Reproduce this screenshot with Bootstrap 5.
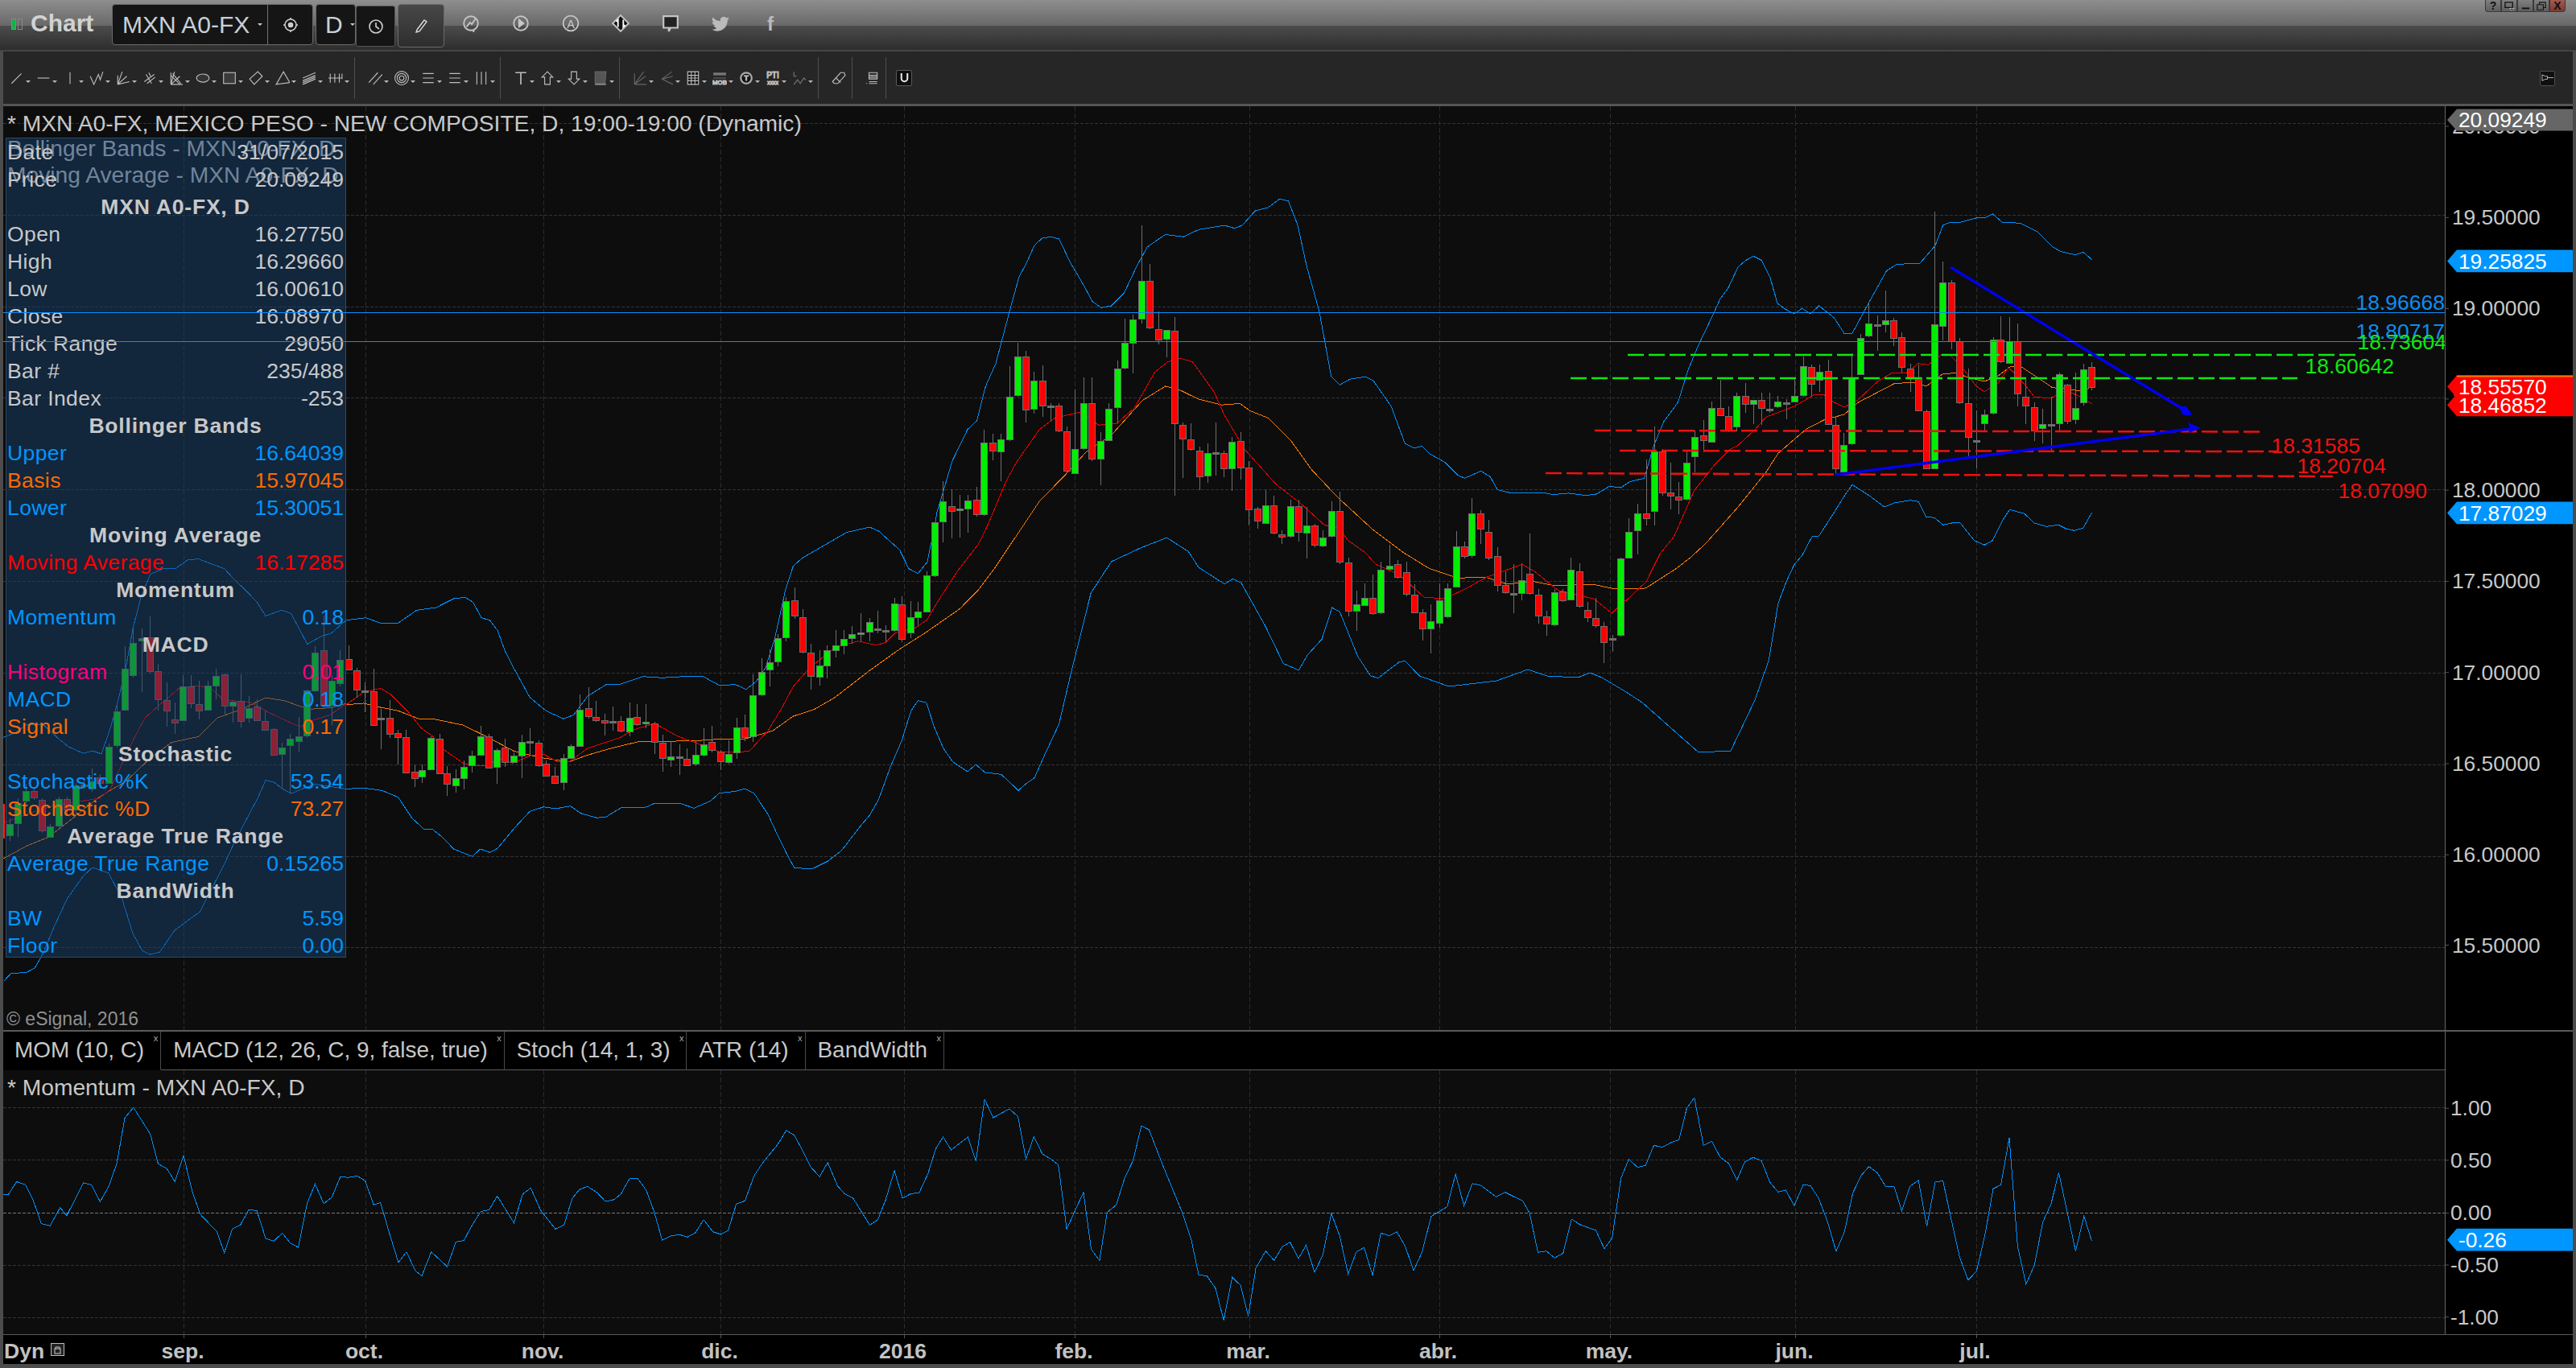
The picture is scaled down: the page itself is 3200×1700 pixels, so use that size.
<!DOCTYPE html>
<html lang="es">
<head>
  <meta charset="UTF-8" />
  <title>Chart - MXN A0-FX</title>
  <link href="https://cdn.jsdelivr.net/npm/bootstrap@5.3.3/dist/css/bootstrap.min.css" rel="stylesheet">
  <style>
    html, body { height: 100%; }
    body { background: #000; color: #c8c8c8; font-family: "Liberation Sans", Arial, sans-serif; font-size: 26.5px; overflow: hidden; }
    .app-window { width: 3200px; height: 1700px; background: #4c4c4c; padding: 0 4px 3px 4px; }

    /* title row */
    .title-bar { height: 64px; margin: 0 -4px; padding-left: 14px; background: linear-gradient(#8e8e8e 0, #686868 32px, #4c4c4c 32px, #2d2d2d 62px, #454545 62px); position: relative; }
    .live-mark { width: 15px; height: 14px; margin-top: 23px; }
    .live-mark i { display: block; width: 6px; height: 14px; border: 1px solid #888; }
    .live-mark i:first-child { background: #12b04a; margin-right: 2px; }
    .app-name { font-size: 30px; font-weight: 700; color: #d2d2d2; line-height: 58px; margin-left: 9px; width: 101px; }
    .sym-box { height: 51px; margin-top: 5px; background: #151515; border: 1px solid #6a6a6a; border-radius: 4px; color: #c8d0d8; }
    .sym-text { font-size: 30px; line-height: 49px; }
    .caret-mini { width: 0; height: 0; border-left: 3px solid transparent; border-right: 3px solid transparent; border-top: 3px solid #ccc; }
    .head-ico { width: 62px; height: 58px; }
    .head-ico svg { display: block; overflow: visible; }
    .pencil-box { width: 58px; height: 54px; margin: 5px 2px 0 3px; background: linear-gradient(#474747, #2e2e2e); border: 1px solid #6a6a6a; border-radius: 4px; }
    .clock-box { width: 49px; height: 51px; margin-top: 7px; background: #151515; border: 1px solid #555; border-radius: 3px; }
    .win-btns { position: absolute; top: 0; right: 13px; }
    .win-btn { width: 20px; height: 15px; border: 1px solid #3a3a3a; border-top: 0; background: linear-gradient(#808080, #5e5e5e); color: #111; font-size: 14px; font-weight: 700; line-height: 14px; text-align: center; }
    .win-btn:first-child { border-radius: 0 0 0 4px; }
    .win-btn:last-child { border-radius: 0 0 4px 0; background: linear-gradient(#a55a4e, #7c3a30); }

    /* drawing tools row */
    .draw-bar { height: 65px; padding-left: 5px; background: #262626; position: relative; }
    .tool-btn { width: 33px; height: 100%; padding-left: 3px; flex: none; }
    .tool-btn-sm { width: 26px; }
    .tool-btn b { display: block; width: 0; height: 0; margin: 10px 0 0 2px; border-left: 3px solid transparent; border-right: 3px solid transparent; border-top: 3px solid #bbb; }
    .tool-sep { width: 1px; height: 52px; margin: 0 13px 0 2px; background: #4e4e4e; flex: none; }
    .magnet-btn { width: 20px; height: 20px; margin-left: -1px; background: #0f0f0f; border: 1px solid #5a5a5a; border-radius: 2px; flex: none; }
    .pin-btn { position: absolute; top: 24px; left: 3151px; width: 19px; height: 19px; background: #0f0f0f; border: 1px solid #4f4f4f; border-radius: 2px; }
    .dash-top { height: 3px; background: #555; }

    /* chart panes */
    .pane-row { width: 3192px; flex: none; }
    .plot-area { width: 3033px; position: relative; background: #0d0d0d; overflow: hidden; flex: none; }
    .axis-col { width: 159px; background: #000; border-left: 1px solid #666; flex: none; position: relative; }
    .fill-svg { position: absolute; inset: 0; width: 100%; height: 100%; display: block; }
    svg text { font-family: "Liberation Sans", Arial, sans-serif; font-size: 26.5px; fill: #c8c8c8; }
    svg text.pane-title { font-size: 28.2px; }
    svg text.tag-text { fill: #fff; }
    svg text.bold-text { font-weight: 700; fill: #c2c2c2; }

    /* data window, lies over the chart */
    .data-window { position: absolute; left: 3px; top: 39px; width: 423px; height: 1019px; background: rgba(23, 63, 107, .5); border: 1px solid #2b4a66; padding: 0 2px 0 1px; }
    .data-row { height: 34px; line-height: 34px; white-space: nowrap; }
    .data-row span:first-child { letter-spacing: .4px; }
    .data-head { font-weight: 700; text-align: center; letter-spacing: .8px; }
    .c-blue { color: #0096ff; }
    .c-orange { color: #ff6a00; }
    .c-red { color: #f00; }
    .c-pink { color: #ff0080; }

    /* indicator tabs */
    .tab-strip { height: 50px; background: #000; border-top: 2px solid #5a5a5a; }
    .tab-list { width: 3033px; flex: none; border-bottom: 1px solid #5a5a5a; }
    .ind-tab { height: 48px; line-height: 46px; font-size: 27.9px; padding: 0 20px 0 15px; background: #000; border-right: 1px solid #4a4a4a; position: relative; margin-bottom: -1px; border-bottom: 1px solid #5a5a5a; color: #c8c8c8; white-space: nowrap; }
    .ind-tab:first-child { padding-left: 14px; border-bottom-color: #000; }
    .tab-close { position: absolute; top: 3px; right: 3px; font-size: 11px; line-height: 11px; color: #aaa; }
    .time-axis { height: 37px; background: #000; border-top: 1px solid #5a5a5a; }
  </style>
</head>
<body>
  <div class="app-window d-flex flex-column">

    <!-- Title row -->
    <div class="title-bar d-flex">
      <div class="live-mark d-flex"><i></i><i></i></div>
      <div class="app-name">Chart</div>
      <div class="sym-box d-flex align-items-center" style="width:250px">
        <span class="sym-text ms-2 ps-1">MXN A0-FX</span>
        <span class="caret-mini" style="margin-left:10px"></span>
        <span class="d-flex align-items-center justify-content-center h-100 border-start border-secondary flex-grow-1" style="margin-left:6px" id="icoGear"></span>
      </div>
      <div class="sym-box d-flex align-items-center" style="width:50px;margin-left:3px">
        <span class="sym-text" style="margin-left:11px">D</span>
        <span class="caret-mini" style="margin-left:9px"></span>
      </div>
      <div class="clock-box d-flex align-items-center justify-content-center" id="icoClock"></div>
      <div class="pencil-box d-flex align-items-center justify-content-center" id="icoPencil"></div>
      <div class="d-flex" id="headIcons"></div>
      <div class="win-btns d-flex">
        <div class="win-btn">?</div>
        <div class="win-btn" id="icoScreen"></div>
        <div class="win-btn" id="icoMin"></div>
        <div class="win-btn" id="icoMax"></div>
        <div class="win-btn">X</div>
      </div>
    </div>

    <!-- Drawing tools row -->
    <div class="draw-bar d-flex align-items-center" id="drawBar">
      <div class="magnet-btn d-flex align-items-center justify-content-center" id="icoMagnet"></div>
      <div class="pin-btn d-flex align-items-center justify-content-center" id="icoPin"></div>
    </div>
    <div class="dash-top"></div>

    <!-- Price pane -->
    <div class="pane-row d-flex" style="height:1148px">
      <div class="plot-area">
        <svg class="fill-svg" id="priceSvg" viewBox="4 132 3033 1148"></svg>
        <div class="data-window">
          <div class="data-row d-flex justify-content-between"><span>Date</span><span>31/07/2015</span></div>
          <div class="data-row d-flex justify-content-between"><span>Price</span><span>20.09249</span></div>
          <div class="data-row data-head">MXN A0-FX, D</div>
          <div class="data-row d-flex justify-content-between"><span>Open</span><span>16.27750</span></div>
          <div class="data-row d-flex justify-content-between"><span>High</span><span>16.29660</span></div>
          <div class="data-row d-flex justify-content-between"><span>Low</span><span>16.00610</span></div>
          <div class="data-row d-flex justify-content-between"><span>Close</span><span>16.08970</span></div>
          <div class="data-row d-flex justify-content-between"><span>Tick Range</span><span>29050</span></div>
          <div class="data-row d-flex justify-content-between"><span>Bar #</span><span>235/488</span></div>
          <div class="data-row d-flex justify-content-between"><span>Bar Index</span><span>-253</span></div>
          <div class="data-row data-head">Bollinger Bands</div>
          <div class="data-row d-flex justify-content-between c-blue"><span>Upper</span><span>16.64039</span></div>
          <div class="data-row d-flex justify-content-between c-orange"><span>Basis</span><span>15.97045</span></div>
          <div class="data-row d-flex justify-content-between c-blue"><span>Lower</span><span>15.30051</span></div>
          <div class="data-row data-head">Moving Average</div>
          <div class="data-row d-flex justify-content-between c-red"><span>Moving Average</span><span>16.17285</span></div>
          <div class="data-row data-head">Momentum</div>
          <div class="data-row d-flex justify-content-between c-blue"><span>Momentum</span><span>0.18</span></div>
          <div class="data-row data-head">MACD</div>
          <div class="data-row d-flex justify-content-between c-pink"><span>Histogram</span><span>0.01</span></div>
          <div class="data-row d-flex justify-content-between c-blue"><span>MACD</span><span>0.18</span></div>
          <div class="data-row d-flex justify-content-between c-orange"><span>Signal</span><span>0.17</span></div>
          <div class="data-row data-head">Stochastic</div>
          <div class="data-row d-flex justify-content-between c-blue"><span>Stochastic %K</span><span>53.54</span></div>
          <div class="data-row d-flex justify-content-between c-orange"><span>Stochastic %D</span><span>73.27</span></div>
          <div class="data-row data-head">Average True Range</div>
          <div class="data-row d-flex justify-content-between c-blue"><span>Average True Range</span><span>0.15265</span></div>
          <div class="data-row data-head">BandWidth</div>
          <div class="data-row d-flex justify-content-between c-blue"><span>BW</span><span>5.59</span></div>
          <div class="data-row d-flex justify-content-between c-blue"><span>Floor</span><span>0.00</span></div>
        </div>
        <svg class="fill-svg" id="overSvg" viewBox="4 132 3033 1148"></svg>
      </div>
      <div class="axis-col"><svg class="fill-svg" id="priceAxis" viewBox="3037 132 159 1148"></svg></div>
    </div>

    <!-- Indicator tabs -->
    <div class="pane-row tab-strip d-flex">
      <div class="tab-list d-flex">
        <div class="ind-tab">MOM (10, C)<span class="tab-close">x</span></div>
        <div class="ind-tab">MACD (12, 26, C, 9, false, true)<span class="tab-close">x</span></div>
        <div class="ind-tab">Stoch (14, 1, 3)<span class="tab-close">x</span></div>
        <div class="ind-tab">ATR (14)<span class="tab-close">x</span></div>
        <div class="ind-tab">BandWidth<span class="tab-close">x</span></div>
      </div>
      <div class="axis-col"></div>
    </div>

    <!-- Momentum pane -->
    <div class="pane-row d-flex" style="height:328px">
      <div class="plot-area"><svg class="fill-svg" id="momSvg" viewBox="4 1331 3033 328"></svg></div>
      <div class="axis-col"><svg class="fill-svg" id="momAxis" viewBox="3037 1331 159 328"></svg></div>
    </div>

    <!-- Time axis -->
    <div class="pane-row time-axis"><svg class="d-block" id="timeSvg" width="3192" height="36" viewBox="4 1660 3192 36"></svg></div>
  </div>

  <script>
    // Month gridlines, same x in both panes
    const MONTHS = [['sep.',228],['oct.',453.5],['nov.',675],['dic.',895],['2016',1122.5],['feb.',1335],['mar.',1551.5],['abr.',1787.5],['may.',2000],['jun.',2230],['jul.',2454.5]];
    const priceY = p => 608.3 + (18 - p) * 227.6;
    const GRID_PRICES = [20,19.5,19,18.5,18,17.5,17,16.5,16,15.5];

    // Each series was read from crops of the screenshot: sx/ox/sy/oy turn crop coords into page coords
    const Z3 = { sx: 3, ox: 0, sy: 2.8, oy: 660 };
    const Z8 = { sx: 1.742, ox: 420, sy: 3, oy: 600 };
    const Z7 = { sx: 1.568, ox: 1100, sy: 2.8, oy: 280 };
    const Z9 = { sx: 2.01, ox: 1980, sy: 3, oy: 300 };
    const Z4 = { sx: 1.568, ox: 2200, sy: 3, oy: 240 };
    const PX = { sx: 1, ox: 0, sy: 1, oy: 0 };

    const CANDLES = [
      [Z3, '35,g,1020,1057,1000,1078;65,g,945,1017,930,1065;97,g,905,938,880,945;126,r,905,928,895,935;157,r,935,1042,930,1050;187,g,1027,1065,1020,1068;220,g,932,1025,925,1030;250,r,932,968,925,985;281,g,885,968,875,985;312,d,885,885,860,890;343,g,870,897,825,908;373,r,858,875,845,895;404,g,750,877,740,880;435,g,628,745,600,752;466,g,478,622,400,625;496,g,390,502,340,510;527,g,372,382,340,560;558,r,370,488,297,495;589,r,488,585,462,625;620,r,587,625,525,680;650,r,656,665,595,705;682,g,540,658,500,662;712,r,540,600,500,615;742,r,603,625,520,655;773,g,537,622,520,625;805,g,505,538,480,585;836,r,498,608,495,640;866,g,593,608,590,665;898,r,592,662,497,682;928,g,615,650,575,665;958,r,610,658,585,660;988,r,660,692,628,695;1020,r,690,777,685,782;1050,g,752,775,735,895;1081,g,723,746,705,910;1112,g,715,730,648,770;1144,g,555,712,552,720;1174,g,422,553,400,560;1205,r,415,605,295,620;1235,g,520,605,500,675;1267,g,447,530,415,540'],
      [Z8, '22,r,658,697,605,700;40,r,700,772,690,800;58,d,776,776,745,855;76,r,778,902,693,905;93,d,878,878,843,992;111,r,877,935,810,950;129,r,934,949,920,1050;147,r,949,1081,920,1082;165,r,1078,1102,1052,1133;182,g,1070,1096,1050,1120;201,g,952,1067,945,1072;219,r,955,1082,937,1085;236,r,1084,1123,1055,1167;254,g,1100,1127,1068,1155;272,g,1058,1102,1035,1143;290,g,1018,1054,1000,1080;308,g,945,1015,905,1018;326,r,945,1062,937,1065;344,g,997,1060,990,1122;361,r,988,1040,955,1060;379,g,1018,1040,1005,1045;397,g,967,1018,940,1100;415,d,965,965,915,1020;433,r,970,1052,960,1060;450,r,1047,1091,1035,1095;469,r,1093,1120,1060,1122;487,g,1027,1117,1010,1145;504,g,982,1027,975,1030;522,g,847,980,790,985;541,r,840,869,762,880;558,r,874,884,812,890;576,r,886,895,860,942;594,d,890,890,835,925;612,r,887,925,870,930;630,g,877,928,820,945;647,r,874,900,825,905;666,g,891,898,825,915;684,r,896,967,890,1010;702,r,970,1025,940,1078;719,g,1021,1033,962,1060;738,d,1022,1022,975,1090;755,r,1030,1052,990,1055;773,g,1015,1048,960,1055;790,g,974,1013,915,1020;809,r,967,997,905,1005;827,r,1003,1037,995,1070;844,g,1010,1040,960,1048;862,g,913,1005,875,1030;880,r,912,948,863,962;898,g,793,945,715,965;916,g,706,790,655,795;934,g,670,697,620,760;952,g,578,667,565,685;969,g,440,575,425,590;987,r,439,496,390,508;1005,r,500,631,470,635;1023,r,634,721,600,772;1041,g,681,724,625,755;1058,g,625,680,605,730;1076,g,607,623,550,650;1094,g,583,605,550,640;1112,g,565,578,535,600;1130,g,559,565,487,590;1149,g,520,556,505,590;1167,d,545,545,478,560;1184,d,553,553,530,595;1203,g,451,548,430,555;1220,r,454,583,422,595;1238,g,502,558,440,580;1255,g,481,502,445,530;1274,g,346,479,330,482;1291,g,148,346,144,350;1309,g,70,145,-6,222;1327,r,88,106,25,207;1345,g,97,103,45,205;1363,g,67,97,45,185;1381,r,64,118,15,125'],
      [Z7, '192,g,757,1006,712,1012;209,r,757,785,725,817;225,g,746,788,725,890;241,g,595,746,490,750;257,g,457,592,410,595;273,r,457,640,437,685;289,g,539,639,510,655;305,r,539,628,488,665;321,d,630,630,620,680;337,r,628,715,620,720;353,r,718,855,700,860;369,g,777,863,572,865;386,g,620,775,530,780;402,r,620,813,530,820;418,g,750,813,720,905;434,g,637,747,620,750;451,g,499,634,470,690;466,g,410,496,325,500;482,g,328,410,310,515;499,g,194,326,0,342;515,r,194,356,135,360;531,r,360,398,300,415;547,g,365,396,365,460;563,r,366,690,318,942;579,r,695,743,685,878;595,r,746,779,690,785;611,r,785,874,770,920;627,g,793,872,760,895;643,d,792,792,685,870;659,r,791,846,785,875;675,g,754,846,735,925;691,r,751,844,720,885;707,r,844,989,820,1045;724,r,985,1028,980,1055;740,g,975,1037,920,1040;756,r,975,1070,940,1075;772,r,1074,1083,1060,1108;788,g,976,1082,955,1085;804,r,978,1068,955,1100;820,g,1045,1070,980,1160;836,r,1043,1112,1040,1120;852,g,1085,1115,1060,1120;869,g,995,1082,960,1085;885,r,995,1170,928,1180;901,r,1174,1340,1155,1360;917,g,1320,1340,1270,1410;933,g,1297,1322,1245,1325;949,r,1297,1350,1215,1355;965,g,1197,1348,1170,1352;982,g,1183,1195,1112,1198;998,r,1180,1224,1165,1230;1014,r,1208,1283,1170,1290;1030,r,1284,1348,1250,1350;1046,r,1348,1404,1335,1445;1062,g,1378,1402,1320,1490;1078,g,1306,1383,1245,1400;1094,g,1262,1360,1245,1365;1111,g,1118,1258,1065,1260;1127,r,1118,1152,1100,1158;1142,g,1001,1149,950,1155;1158,r,1003,1056,990,1110;1175,r,1068,1157,1025,1165;1191,r,1152,1252,1120,1275;1207,r,1252,1278,1205,1282;1223,d,1282,1282,1180,1350;1239,g,1234,1280,1175,1305;1255,r,1213,1280,1072,1285;1271,r,1284,1358,1265,1385;1287,r,1362,1385,1340,1428;1303,g,1276,1390,1265,1395;1319,r,1273,1305,1265,1310;1335,g,1197,1303,1155,1305;1351,r,1205,1324,1175,1330;1367,r,1337,1364,1310,1380;1383,r,1366,1392,1295,1400;1399,r,1393,1450,1380,1522;1416,d,1438,1438,1425,1485;1432,g,1160,1425,1155,1430;1448,g,1066,1157,1018,1160;1465,g,1002,1062,970,1145;1481,r,1002,1018,815,1045'],
      [Z9, '150,g,784,1006,690,1060;170,r,784,935,775,947;191,r,937,947,825,1000;212,r,950,962,897,1017;232,g,826,961,780,965;252,g,730,800,705,860;273,r,722,742,665,785;294,g,622,746,597,750;315,r,622,647,515,650;335,r,650,705,615,710;356,g,577,690,565,708;377,r,577,607,528,640;397,g,592,605,590,680;418,r,590,622,565,685;439,d,627,627,563,640;459,g,598,614,575,622;480,d,603,603,587,662;501,g,577,598,510,600;522,g,465,574,430,578;542,r,469,532,460,580;562,g,485,516,460,560;584,r,482,682,440,685;604,r,683,845,650,870;624,g,760,857,715,862;644,g,510,754,418,758;665,g,361,496,345,498;686,g,305,352,225,357;707,d,312,312,275,408;728,g,295,308,183,340;748,r,295,361,285,390;768,r,356,469,340,490;789,r,473,510,455,560;810,r,508,631,460,632;831,r,634,847,628,849;851,g,310,845,-110,848;871,g,154,316,75,368;893,r,154,372,145,402;913,r,372,601,360,605;934,r,602,730,475,805;954,d,744,744,630,845;975,g,646,679,628,708;996,g,367,640,358,645;1016,r,365,448,280,452;1038,g,371,452,283,455;1058,r,371,568,305,615;1078,r,578,613,510,682;1099,r,617,706,600,744;1120,g,682,697,623,752;1141,d,684,684,580,785;1161,g,494,679,490,705;1181,r,533,670,530,680;1202,g,620,664,490,680;1223,g,476,601,456,612;1243,r,467,544,450,556']
    ];

    const UPPER = [
      [Z3, '12,718 60,700 100,672 160,672 215,720 255,750 310,773 345,765 378,775 410,690 440,590 470,470 495,340 525,230 560,150 610,130 655,130 700,100 740,97 790,115 835,130 870,165 925,215 960,250 990,295 1050,275 1085,287 1145,393 1200,365 1235,355 1290,310'],
      [Z8, '18,512 60,503 95,525 130,523 170,475 212,465 250,432 275,427 292,445 310,503 328,512 345,550 362,630 380,690 415,800 450,850 488,880 510,865 540,795 580,752 612,750 660,722 700,727 760,721 790,722 825,755 860,752 883,770 905,740 925,690 945,580 968,400 985,310 1005,280 1050,235 1100,185 1150,165 1170,180 1215,250 1235,320 1255,338 1275,295 1290,170'],
      [Z7, '100,1000 110,940 130,820 160,710 178,680 195,560 215,480 240,310 260,180 275,130 290,70 305,45 322,40 338,47 360,130 385,205 403,265 420,287 440,280 465,235 490,140 510,75 545,32 580,40 610,15 660,0 680,10 695,0 720,-50 745,-62 768,-92 785,-84 803,0 820,140 845,300 868,525 885,555 905,535 935,527 950,540 985,630 1012,760 1030,775 1045,768 1060,795 1090,825 1115,870 1128,880 1160,855 1178,875 1192,920 1215,930 1280,930 1300,937 1330,932 1365,940 1385,935 1410,908 1432,913 1450,892 1478,880'],
      [Z9, '150,760 175,670 210,600 235,480 260,390 300,265 315,215 335,175 360,95 380,70 398,55 418,70 440,135 458,230 475,250 500,270 520,250 540,270 562,240 600,285 625,343 645,343'],
      [Z4, '190,410 225,290 245,265 290,262 320,195 335,120 350,108 370,108 405,90 415,93 432,78 450,108 485,112 520,145 548,200 565,218 592,230 608,220 625,248']
    ];
    const LOWER = [
      [Z3, '15,1565 40,1540 100,1535 130,1520 160,1470 200,1380 250,1280 310,1200 345,1170 405,1190 455,1280 495,1400 530,1460 560,1473 595,1465 650,1390 700,1355 745,1325 780,1260 830,1170 870,1090 920,1000 960,930 990,867 1020,873 1050,895 1085,913 1120,900 1170,880 1290,897'],
      [Z8, '18,1141 55,1138 95,1147 130,1172 160,1250 185,1290 205,1293 225,1320 250,1365 290,1393 308,1365 328,1378 345,1363 380,1290 415,1225 445,1208 470,1215 503,1205 525,1232 560,1249 580,1245 612,1212 665,1210 685,1195 740,1195 770,1213 805,1187 825,1157 860,1150 880,1140 900,1157 930,1235 950,1310 970,1380 987,1435 1025,1440 1060,1410 1090,1370 1130,1280 1150,1240 1170,1180 1195,1060 1220,960 1240,850 1255,812 1273,820 1290,910 1310,990 1330,1040 1362,1077 1380,1050 1400,1080 1435,1087 1472,1147 1490,1120 1507,1100 1530,1010 1560,900'],
      [Z7, '360,1568 400,1280 440,1170 500,1120 548,1087 590,1135 610,1190 660,1248 677,1230 693,1245 740,1395 775,1525 805,1548 822,1495 850,1440 870,1330 885,1345 920,1500 945,1568 960,1575 1000,1520 1012,1515 1040,1568'],
      [PX, '1800,853 1859,846 1898,832 1922,840 1960,842 1975,836 1990,842 2020,860 2040,873 2110,935 2150,933 2180,870'],
      [Z9, '437,1560 460,1350 480,1270 500,1205 520,1170 545,1100 562,1098 600,1010 625,950 645,907 690,950 725,990 750,975 790,965 810,970 830,1027 850,1030 872,1057 900,1048 915,1050 950,1115 975,1132 995,1115 1020,1040 1038,1000 1075,1015 1100,1050 1130,1063 1160,1057 1180,1072 1200,1078 1222,1068 1243,1012']
    ];
    const MA_RED = [
      [Z3, '15,1015 100,985 200,955 300,940 370,930 410,900 460,800 500,720 540,650 600,600 670,545 740,538 790,550 830,585 870,590 930,595 1000,630 1090,670 1120,680 1160,660 1230,640 1290,600'],
      [Z8, '18,827 55,780 92,766 115,790 155,860 180,915 205,945 225,990 270,1045 290,1053 320,1053 350,1030 378,1045 420,1015 445,1012 475,1040 500,1040 540,990 610,950 640,920 685,897 735,945 775,970 825,1003 860,1005 890,1000 930,925 960,840 985,760 1020,690 1075,615 1125,590 1165,605 1185,595 1205,560 1250,540 1275,510 1295,450 1340,330 1385,230'],
      [Z7, '200,1040 235,890 255,825 300,710 330,670 355,660 380,650 415,695 450,690 485,635 525,510 550,475 575,463 598,475 640,580 660,660 700,780 760,900 810,970 855,1043 885,1055 900,1095 935,1140 955,1180 1000,1215 1050,1295 1090,1298 1130,1265 1170,1225 1240,1180 1265,1205 1310,1270 1380,1300 1415,1350 1440,1305'],
      [Z9, '80,1340 130,1270 165,1165 200,1100 250,930 300,835 340,775 360,760 400,705 430,655 500,615 550,572 575,572 600,600 625,618 660,590 710,520 745,490 780,490 810,455 835,460 870,420 890,425 925,480 955,540 975,560 1010,527 1035,470 1060,505 1100,580 1140,585 1180,555 1222,585 1243,605']
    ];
    const MA_ORANGE = [
      [Z3, '12,1140 100,1095 180,1065 270,1000 370,925 470,870 560,790 640,735 740,715 810,650 900,620 990,580 1060,590 1150,620 1230,615 1290,600'],
      [Z8, '18,827 55,822 85,835 130,850 175,880 205,880 270,903 320,945 380,1000 440,1025 500,1040 540,1015 590,990 650,965 770,962 830,955 880,955 940,925 985,870 1030,845 1075,800 1150,700 1215,620 1270,560 1345,470 1385,400 1420,320'],
      [Z7, '240,1120 300,960 360,850 390,790 440,730 500,610 545,560 570,570 610,605 655,625 690,620 710,645 745,670 790,750 830,850 880,945 950,1060 1010,1140 1060,1195 1115,1227 1170,1225 1210,1248 1265,1240 1300,1253 1380,1250 1420,1265 1470,1265'],
      [Z9, '130,1292 205,1220 240,1180 280,1125 360,990 430,860 460,790 530,700 575,665 625,645 660,600 750,530 800,525 830,540 870,495 905,490 930,505 975,522 1010,500 1040,467 1070,470 1110,510 1145,545 1180,550 1222,560 1243,540']
    ];
    const MOMENTUM = [
      [{ sx: 1.206, ox: 0, sy: 3, oy: 1240 }, '5,735 12,738 25,688 38,700 50,760 62,845 75,853 90,785 100,815 125,693 137,700 150,763 163,705 175,620 187,450 200,412 225,510 237,622 250,640 262,688 275,590 288,725 300,810 325,875 336,953 348,865 360,850 373,792 385,797 398,900 410,910 423,880 435,918 447,933 460,770 472,697 485,770 497,747 510,670 522,673 535,667 547,685 560,775 570,766 585,895 597,990 609,950 622,1020 632,1040 646,950 670,1005 683,913 695,908 705,860 720,800 733,793 745,742 770,842 783,735 795,712 810,795 832,865 845,850 857,752 868,718 880,706 895,730 907,762 920,755 930,735 943,678 955,676 968,720 980,800 992,907 1005,890 1018,886 1030,895 1042,878 1054,830 1068,875 1080,885 1091,870 1103,772 1116,760 1130,665 1143,617 1165,550 1178,497 1190,515 1203,575 1215,635 1228,670 1240,617 1255,705 1265,733 1278,750 1303,850 1315,830 1327,755 1340,647 1352,750 1365,733 1377,730 1390,660 1402,565 1413,522 1425,570 1450,522 1462,612 1475,382 1488,450 1512,417 1525,445 1537,605'],
      [{ sx: 1.153, ox: 1280, sy: 3, oy: 1330 }, '5,250 17,315 28,332 40,355 52,595 76,458 87,670 99,712 110,533 123,505 135,405 147,340 159,210 170,225 190,360 217,530 230,630 241,765 253,770 265,815 277,935 289,775 301,805 312,920 323,740 337,677 349,712 361,660 372,644 384,705 395,655 407,757 419,690 431,537 443,620 455,762 467,680 478,664 490,767 502,610 514,620 525,605 537,660 549,750 561,680 574,548 597,512 609,390 621,508 633,425 645,432 667,475 680,458 705,490 715,535 727,682 739,677 751,703 763,685 775,558 787,578 810,600 822,668 833,630 846,405 857,335 870,365 881,358 893,283 905,290 918,272 929,262 940,145 951,105 964,283 976,268 988,327 1000,350 1012,413 1023,345 1035,328 1047,340 1059,420 1071,457 1082,450 1094,508 1107,430 1117,433 1129,480 1142,570 1154,678 1166,605 1178,460 1190,395 1201,362 1213,385 1225,436 1237,436 1248,527 1260,435 1272,413 1284,585 1296,420 1307,415 1319,560 1331,700 1343,785 1355,753 1367,620 1379,445 1390,430 1402,255 1414,660 1426,800 1438,730 1450,570 1462,500 1473,385 1485,530 1497,678 1509,547 1520,638']
    ];

    // Turn stitched crop-coordinate runs into one polyline points string
    function stitch(runs) {
      return runs.map(([z, s]) => s.split(' ').map(p => {
        const [x, y] = p.split(',').map(Number);
        return `${(z.ox + x / z.sx).toFixed(1)},${(z.oy + y / z.sy).toFixed(1)}`;
      }).join(' ')).join(' ');
    }
    const line = (runs, color) => `<polyline points="${stitch(runs)}" fill="none" stroke="${color}" stroke-width="1" shape-rendering="crispEdges"/>`;

    function candleSvg() {
      const fills = { g: '#00ee00', r: '#ff0000' };
      let out = '<g shape-rendering="crispEdges">';
      CANDLES.forEach(([z, data]) => data.split(';').forEach(item => {
        const [xs, kind, ...rest] = item.split(',');
        const [t, b, wt, wb] = rest.map(v => Math.round(z.oy + Number(v) / z.sy));
        const x = Math.round(z.ox + Number(xs) / z.sx);
        out += `<path d="M${x + .5} ${wt}V${wb}" stroke="#6e6e6e"/>`;
        if (kind === 'd') out += `<rect x="${x - 4}" y="${t - 1}" width="9" height="3" fill="#6e6e6e"/>`;
        else out += `<rect x="${x - 3.5}" y="${t + .5}" width="8" height="${Math.max(b - t, 2)}" fill="${fills[kind]}" stroke="#6e6e6e"/>`;
      }));
      return out + '</g>';
    }

    function gridSvg(ys, top, bottom, zero) {
      let out = '<g shape-rendering="crispEdges" fill="none">';
      MONTHS.forEach(([, x]) => { out += `<path d="M${Math.round(x) + .5} ${top}V${bottom}" stroke="#2c2c2c" stroke-dasharray="6 3"/>`; });
      ys.forEach(y => {
        const row = Math.round(y) + .5;
        out += `<path d="M4 ${row}H3037" stroke="${y === zero ? '#777' : '#333'}" stroke-dasharray="4 2"/>`;
      });
      return out + '</g>';
    }

    // Price pane
    const gridYs = GRID_PRICES.map(priceY);
    document.getElementById('priceSvg').innerHTML =
      gridSvg(gridYs, 132, 1280) +
      `<text class="pane-title" x="9" y="163">* MXN A0-FX, MEXICO PESO - NEW COMPOSITE, D, 19:00-19:00 (Dynamic)</text>` +
      `<text class="pane-title" x="9" y="194">Bollinger Bands - MXN A0-FX, D</text>` +
      `<text class="pane-title" x="9" y="227">Moving Average - MXN A0-FX, D</text>` +
      `<text x="8" y="1274" style="font-size:23px;fill:#909090">© eSignal, 2016</text>` +
      line(UPPER, '#0090ff') + line(LOWER, '#0090ff') +
      line(MA_ORANGE, '#ff7a00') + line(MA_RED, '#f00000') +
      `<rect x="4" y="999" width="2" height="43" fill="#ff2020"/>` +
      candleSvg() +
      // dashed levels
      `<g fill="none" stroke-dasharray="20 6" stroke-width="2.5">
        <path d="M2022 441H2927" stroke="#10e810"/>
        <path d="M1951 470H2854" stroke="#10e810"/>
        <path d="M1981 535L2807 536.5" stroke="#f01010"/>
        <path d="M2012 560L2831 561" stroke="#f01010"/>
        <path d="M1920 588L2898 592" stroke="#f01010"/>
      </g>` +
      // trend arrows
      `<g fill="none" stroke="#0000f0" stroke-width="3.5">
        <path d="M2423 332L2721 514"/>
        <path d="M2280 590L2730 532"/>
      </g>
      <g fill="#0000f0">
        <polygon points="2723,516 2712,516 2706,504 2711,505 2716,505"/>
        <polygon points="2734,532 2718,525 2720,531 2719,538"/>
      </g>`;
    document.getElementById('overSvg').innerHTML =
      `<g shape-rendering="crispEdges" stroke="#0a8cff" fill="none">
        <path d="M4 388.5H3037"/><path d="M4 424.5H3037"/>
      </g>
      <text x="3037" y="385" text-anchor="end" style="fill:#0f8cf0">18.96668</text>
      <text x="3037" y="421" text-anchor="end" style="fill:#0f8cf0">18.80717</text>
      <text x="3039" y="434" text-anchor="end" style="fill:#10e810">18.73604</text>
      <text x="2974" y="464" text-anchor="end" style="fill:#10e810">18.60642</text>
      <text x="2932" y="563" text-anchor="end" style="fill:#f01010">18.31585</text>
      <text x="2964" y="588" text-anchor="end" style="fill:#f01010">18.20704</text>
      <text x="3015" y="619" text-anchor="end" style="fill:#f01010">18.07090</text>`;

    const tag = (y, h, color, label, edge) =>
      `<polygon points="3039,${y + h / 2} 3051,${y} 3196,${y} 3196,${y + h} 3051,${y + h}" fill="${color}"/>` +
      (edge ? `<rect x="3051" y="${y}" width="145" height="2" fill="${edge}"/>` : '') +
      `<text class="tag-text" x="3053" y="${y + h / 2 + 9.5}">${label}</text>`;

    document.getElementById('priceAxis').innerHTML =
      GRID_PRICES.map(p => `<text x="3045" y="${priceY(p) + 9.5}">${p.toFixed(5)}</text>
        <path d="M3037 ${Math.round(priceY(p)) + .5}h4" stroke="#555"/>`).join('') +
      tag(132, 27, '#666', '20.09249') +
      tag(308, 28, '#0096ff', '19.25825') +
      tag(488, 28, '#f00', '18.46852') +
      tag(465, 28, '#f00', '18.55570', '#ff7a00') +
      tag(623, 28, '#0096ff', '17.87029');

    // Momentum pane
    const momYs = [1377, 1442, 1508, 1573, 1638];
    document.getElementById('momSvg').innerHTML =
      gridSvg(momYs, 1331, 1659, 1508) +
      `<text class="pane-title" x="9" y="1362">* Momentum - MXN A0-FX, D</text>` +
      line(MOMENTUM, '#0090ff');
    const momLabels = ['1.00', '0.50', '0.00', '-0.50', '-1.00'];
    document.getElementById('momAxis').innerHTML =
      momYs.map((y, i) => `<text x="3043" y="${y + 9.5}">${momLabels[i]}</text><path d="M3037 ${y + .5}h4" stroke="#555"/>`).join('') +
      tag(1528, 28, '#0096ff', '-0.26');

    // Time axis
    document.getElementById('timeSvg').innerHTML =
      `<text class="bold-text" x="5" y="1689">Dyn</text>
       <rect x="63.5" y="1670.5" width="16" height="15" fill="#222" stroke="#bbb"/>
       <rect x="68" y="1677" width="7" height="6" fill="none" stroke="#ccc"/>
       <path d="M69 1677v-2h5v2" fill="none" stroke="#ccc"/>` +
      MONTHS.map(([m, x]) => `<path d="M${Math.round(x) + .5} 1660v4" stroke="#555"/>
        <text class="bold-text" x="${x - 1}" y="1689" text-anchor="middle">${m}</text>`).join('');

    // Toolbar icons, 16x16 strokes
    const ICONS = {
      line: '<path d="M2 14 13 3"/>',
      hline: '<path d="M1.5 8h13"/>',
      vline: '<path d="M8 1.5v13"/>',
      zig: '<path d="M1 6l4 9 5-11 2 6 3-9"/>',
      fan: '<path d="M2 15 7 1M2 15l10-9M2 15l13-3M2 15V5"/>',
      fork: '<path d="M2 12 13 4M5 14l9-7M4 4l6 10M7 2l2 4"/>',
      fan2: '<path d="M2 15 6 1M2 15l10-9M2 15h13M4 3l9 11M2 5l10 10M2 15V2"/>',
      ell: '<ellipse cx="8" cy="8" rx="7" ry="4.5" fill="#333"/>',
      rect: '<rect x="1.5" y="2" width="13" height="12" fill="#3a3a3a"/>',
      dia: '<path d="M1 9 10 1l5 5-9 9z"/>',
      tri: '<path d="M9 1l7 12-15 2z"/>',
      para: '<path d="M1 8l14-6M1 11l14-6M1 13l14-6M1 15l14-6"/>',
      trident: '<path d="M0 8h15M2 3v10M7 3v10M12 3v10M15 3v6"/>',
      slashes: '<path d="M1 13 11 2M6 15 16 4"/>',
      rings: '<circle cx="8" cy="8" r="7.5"/><circle cx="8" cy="8" r="5"/><circle cx="8" cy="8" r="2.5"/>',
      h3: '<path d="M2 3h12M2 8h12M2 13h12"/>',
      v3: '<path d="M3 1v14M8 1v14M13 1v14"/>',
      tee: '<path d="M2 2h12M8 2v13" stroke-width="1.5"/>',
      up: '<path d="M8 1 2 7h3v8h6V7h3z"/>',
      down: '<path d="M8 15 2 9h3V1h6v8h3z"/>',
      flag: '<path d="M2 1h12l-1 13H2z" fill="#555" stroke="#666"/><path d="M2 15h12"/>',
      fanDim: '<path d="M2 15 12 1M2 15l12-9M2 15h13M2 15V3" stroke="#666"/>',
      back: '<path d="M14 1 3 9l12 6M3 9l12-3" stroke="#666"/>',
      gridi: '<path d="M2 1h12v14H2zM2 5h12M2 8h12M2 11h12M6 1v14M10 1v14" fill="#111"/>',
      mob: '<path d="M1 2h14v3H1z" fill="#777" stroke="none"/><path d="M1 8h14" stroke="#666"/><text x="8" y="15" text-anchor="middle" style="font-size:7px;fill:#777">MOB</text>',
      tcirc: '<circle cx="8" cy="8" r="7" fill="#aaa" stroke="none"/><circle cx="8" cy="8" r="5" fill="#111" stroke="none"/><text x="8" y="11" text-anchor="middle" style="font-size:8px;fill:#ccc">T</text>',
      pti: '<text x="8" y="8" text-anchor="middle" style="font-size:9px;fill:#777">PTI</text><text x="8" y="15" text-anchor="middle" style="font-size:6px;fill:#777">xxxx</text>',
      lzig: '<path d="M2 1v5h3M2 15l4-5 3 4 4-6 2 2" stroke="#777"/>',
      eraser: '<path d="M1 12 10 2h4l1 3-8 9H3zM5 8l5 5"/>',
      note: '<path d="M4 2h9v7H4zM4 5h9M4 7h9M4 12h9M4 14h9M1 14h1"/>',
      ring: '<circle cx="10" cy="10" r="8"/><path d="M10 5v5l4 3"/>',
      gear: '<circle cx="10" cy="10" r="7"/><circle cx="10" cy="10" r="2.5" fill="#ccc"/><path d="M10 1v2M10 17v2M1 10h2M17 10h2"/>',
      pencil: '<path d="M5 15 14 3l3 2-9 12-4 1z" stroke-width="1.4"/>',
      spark: '<circle cx="10" cy="10" r="8"/><path d="M5 14l4-5 2 2 4-6"/><path d="M12 19h2"/>',
      play: '<circle cx="10" cy="10" r="8"/><path d="M8 6l5 4-5 4z" fill="#ccc"/>',
      auto: '<circle cx="10" cy="10" r="8.5"/><text x="10" y="15" text-anchor="middle" style="font-size:13px;fill:#ccc;stroke:none">A</text>',
      swap: '<path d="M10 1l9 9-9 9-9-9z" fill="#111"/><path d="M7 14V6l-2 2M13 6v8l2-2" stroke="#fff"/>',
      chat: '<path d="M2 2h16v13h-8l-2 4v-4H2z" fill="#222" stroke-width="2"/>',
      bird: '<g transform="scale(1.25)"><path fill="#bbb" stroke="none" d="M5.026 15c6.038 0 9.341-5.003 9.341-9.334 0-.14 0-.282-.006-.422A6.685 6.685 0 0 0 16 3.542a6.658 6.658 0 0 1-1.889.518 3.301 3.301 0 0 0 1.447-1.817 6.533 6.533 0 0 1-2.087.793A3.286 3.286 0 0 0 7.875 6.03a9.325 9.325 0 0 1-6.767-3.429 3.289 3.289 0 0 0 1.018 4.382A3.323 3.323 0 0 1 .64 6.575v.045a3.288 3.288 0 0 0 2.632 3.218 3.203 3.203 0 0 1-.865.115 3.23 3.23 0 0 1-.614-.057 3.283 3.283 0 0 0 3.067 2.277A6.588 6.588 0 0 1 .78 13.58a6.32 6.32 0 0 1-.78-.045A9.344 9.344 0 0 0 5.026 15z"/></g>',
      eff: '<text x="10" y="18" text-anchor="middle" style="font-size:22px;font-weight:700;fill:#bbb;stroke:none">f</text>',
      pin: '<path d="M1 3l4 2h3v4H5L1 11zM8 7h8"/>',
      magnet: '<path d="M4 2v7a4 4 0 0 0 8 0V2" stroke-width="2.2"/>',
      screen: '<path d="M2 2h10v7H2z" fill="none" stroke="#111" stroke-width="1.4"/><path d="M8 10h6l-3 3z" fill="#111"/>',
      min: '<path d="M3 10h10" stroke="#111" stroke-width="2"/>',
      max: '<path d="M2 5h8v7H2zM5 5V2h8v7h-3" fill="none" stroke="#111" stroke-width="1.2"/>'
    };
    const ico = (name, size, box, color = '#bdbdbd', weight = 1) =>
      `<svg width="${size}" height="${size}" viewBox="0 0 ${box} ${box}" fill="none" stroke="${color}" stroke-width="${weight}">${ICONS[name]}</svg>`;

    const TOOL_GROUPS = [
      ['line','hline','vline','zig','fan','fork','fan2','ell','rect','dia','tri','para','trident'],
      ['slashes','rings','h3','h3','v3'],
      ['tee','up','down','flag'],
      ['fanDim','back','gridi','mob','tcirc','pti','lzig'],
      ['eraser'],
      ['note']
    ];
    const bar = document.getElementById('drawBar');
    const toolHtml = TOOL_GROUPS.map((group, i) => group.map(name =>
      `<div class="tool-btn d-flex align-items-center${i > 3 ? ' tool-btn-sm' : ''}">${ico(name, 18, 16)}${i > 3 ? '' : '<b></b>'}</div>`
    ).join('') + '<div class="tool-sep"></div>').join('');
    bar.insertAdjacentHTML('afterbegin', toolHtml);

    document.getElementById('icoMagnet').innerHTML = ico('magnet', 15, 16, '#e8e8e8');
    document.getElementById('icoPin').innerHTML = ico('pin', 15, 16);
    document.getElementById('icoGear').innerHTML = ico('gear', 20, 20, '#d0d0d0', 1.6);
    document.getElementById('icoClock').innerHTML = ico('ring', 20, 20, '#d0d0d0', 1.6);
    document.getElementById('icoPencil').innerHTML = ico('pencil', 20, 20, '#ddd');
    document.getElementById('headIcons').innerHTML = ['spark','play','auto','swap','chat','bird','eff'].map(name =>
      `<div class="head-ico d-flex align-items-center justify-content-center">${ico(name, 22, 20, '#c4c4c4', 1.7)}</div>`).join('');
    document.getElementById('icoScreen').innerHTML = ico('screen', 15, 16);
    document.getElementById('icoMin').innerHTML = ico('min', 15, 16);
    document.getElementById('icoMax').innerHTML = ico('max', 15, 16);
  </script>
  <script src="https://cdn.jsdelivr.net/npm/bootstrap@5.3.3/dist/js/bootstrap.bundle.min.js"></script>
</body>
</html>
